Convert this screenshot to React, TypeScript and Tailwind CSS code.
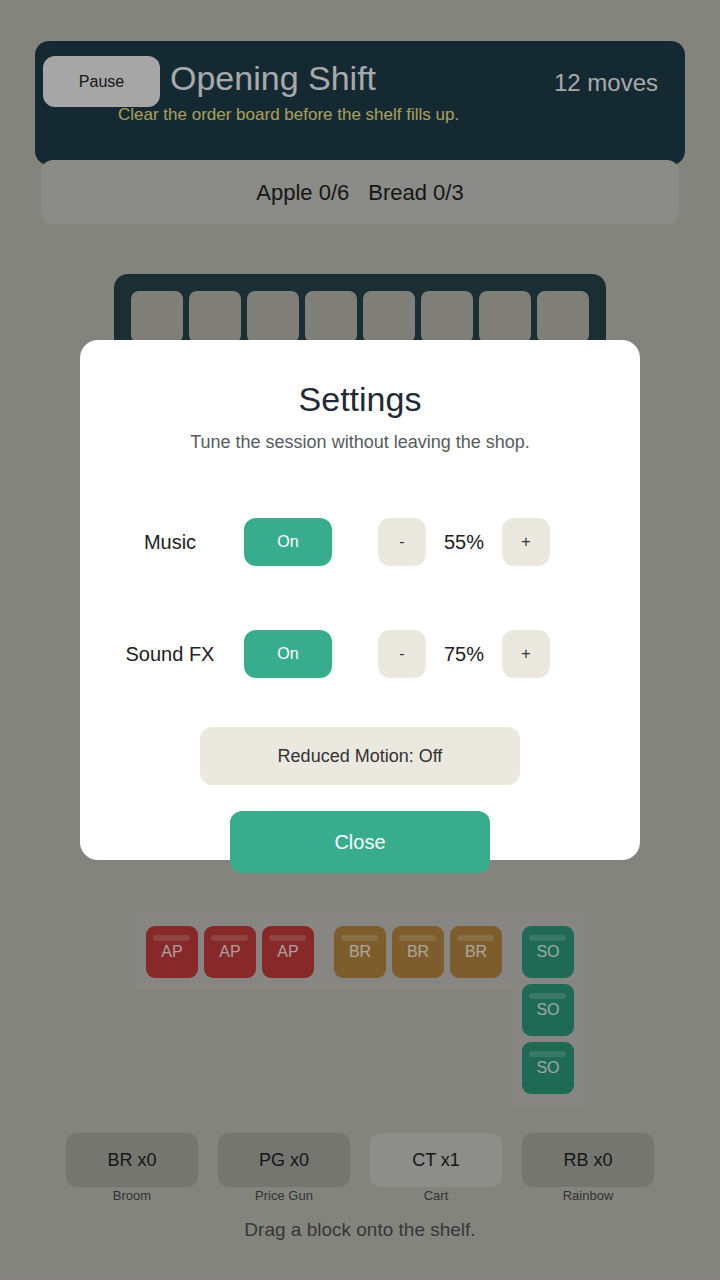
import React from 'react';

const slots = Array.from({ length: 8 }, (_, i) => i);

const groups = [
  { id: 'ap', label: 'AP', color: 'bg-[#c33b3b]', count: 3, dir: 'row' },
  { id: 'br', label: 'BR', color: 'bg-[#b3863e]', count: 3, dir: 'row' },
  { id: 'so', label: 'SO', color: 'bg-[#2b987a]', count: 3, dir: 'col' },
];

const tools = [
  { code: 'BR x0', name: 'Broom', ready: false },
  { code: 'PG x0', name: 'Price Gun', ready: false },
  { code: 'CT x1', name: 'Cart', ready: true },
  { code: 'RB x0', name: 'Rainbow', ready: false },
];

const Block: React.FC<{ label: string; color: string }> = ({ label, color }) => (
  <div className={`relative w-[52px] h-[52px] rounded-[9px] ${color} flex items-center justify-center`}>
    <div className="absolute top-[9px] left-[7px] right-[8px] h-[6px] rounded-full bg-white/20" />
    <span className="text-[16px] text-white/85">{label}</span>
  </div>
);

const VolumeRow: React.FC<{ label: string; value: number }> = ({ label, value }) => (
  <div className="flex items-center pl-[30px]">
    <span className="w-[120px] text-center text-[20px] text-[#222]">{label}</span>
    <button className="ml-[14px] w-[88px] h-[48px] rounded-[12px] bg-[#37ad8e] text-white text-[16px]">
      On
    </button>
    <div className="ml-[46px] flex items-center gap-[18px]">
      <button className="w-[48px] h-[48px] rounded-[12px] bg-[#ebe9df] text-[16px] text-[#333]">-</button>
      <span className="w-[40px] text-center text-[20px] text-[#222]">{value}%</span>
      <button className="w-[48px] h-[48px] rounded-[12px] bg-[#ebe9df] text-[16px] text-[#333]">+</button>
    </div>
  </div>
);

const App: React.FC = () => {
  return (
    <div className="relative h-[1280px] overflow-hidden bg-[#bebdb7] font-['Liberation_Sans',Arial,sans-serif]">
      <div className="px-[35px] pt-[41px]">
        {/* header */}
        <div className="h-[124px] rounded-[14px] bg-[#1e3c47] flex flex-col">
          <div className="flex items-start pt-[15px] pl-[8px] pr-[27px]">
            <button className="w-[117px] h-[51px] rounded-[12px] bg-[#eeeef0] text-[16px] text-[#222]">
              Pause
            </button>
            <h1 className="ml-[10px] mt-[2px] text-[34px] leading-[40px] text-[#eff2f5]">Opening Shift</h1>
            <span className="ml-auto mt-[11px] text-[24px] leading-[32px] text-[#eff2f5]">12 moves</span>
          </div>
          <p className="-mt-[2px] pl-[83px] text-[17px] leading-[20px] text-[#f0e386]">
            Clear the order board before the shelf fills up.
          </p>
        </div>

        {/* order board */}
        <div className="relative -mt-[5px] mx-[6px] h-[64px] rounded-[12px] bg-[#c8c7c3] flex items-center justify-center gap-[19px] text-[22px] text-[#222]">
          <span>Apple 0/6</span>
          <span>Bread 0/3</span>
        </div>
      </div>

      {/* shelf */}
      <div className="mt-[50px] mx-auto w-[492px] h-[86px] rounded-[14px] bg-[#274249] p-[17px] flex gap-[6px]">
        {slots.map((s) => (
          <div key={s} className="w-[52px] h-[52px] rounded-[8px] bg-[#b8b5ae]" />
        ))}
      </div>

      {/* blocks */}
      <div className="mt-[552px] flex justify-center items-start">
        {groups.map((g) => (
          <div
            key={g.id}
            className={`bg-[#c3c1bc] px-[10px] pt-[14px] pb-[12px] flex gap-[6px] ${g.dir === 'col' ? 'flex-col pb-[13px]' : 'flex-row'}`}
          >
            {Array.from({ length: g.count }, (_, i) => (
              <Block key={i} label={g.label} color={g.color} />
            ))}
          </div>
        ))}
      </div>

      {/* tools */}
      <div className="mt-[26px] flex justify-center gap-[20px]">
        {tools.map((t) => (
          <div key={t.name} className="flex flex-col items-center">
            <div
              className={`w-[132px] h-[54px] rounded-[10px] flex items-center justify-center text-[18px] text-[#222] ${
                t.ready ? 'bg-[#cbcac5]' : 'bg-[#aaa9a3]'
              }`}
            >
              {t.code}
            </div>
            <span className="mt-[1px] text-[13px] leading-[16px] text-[#4a4a4a]">{t.name}</span>
          </div>
        ))}
      </div>
      <p className="mt-[14px] text-center text-[19px] leading-[24px] text-[#4f4f4f]">Drag a block onto the shelf.</p>

      {/* settings overlay */}
      <div className="absolute inset-0 bg-black/30 flex justify-center pt-[340px]">
        <div className="w-[560px] h-[520px] rounded-[18px] bg-white flex flex-col items-center pt-[39px]">
          <h2 className="shrink-0 text-[34px] leading-[40px] text-[#1f2a35]">Settings</h2>
          <p className="shrink-0 mt-[11px] text-[18px] leading-[24px] text-[#555b61]">
            Tune the session without leaving the shop.
          </p>
          <div className="shrink-0 mt-[64px] self-stretch">
            <VolumeRow label="Music" value={55} />
          </div>
          <div className="shrink-0 mt-[64px] self-stretch">
            <VolumeRow label="Sound FX" value={75} />
          </div>
          <button className="shrink-0 mt-[49px] w-[320px] h-[58px] rounded-[12px] bg-[#ebe9df] text-[18px] text-[#333]">
            Reduced Motion: Off
          </button>
          <button className="shrink-0 mt-[26px] w-[260px] h-[62px] rounded-[12px] bg-[#37ad8e] text-[20px] text-white">
            Close
          </button>
        </div>
      </div>
    </div>
  );
};

export default App;
